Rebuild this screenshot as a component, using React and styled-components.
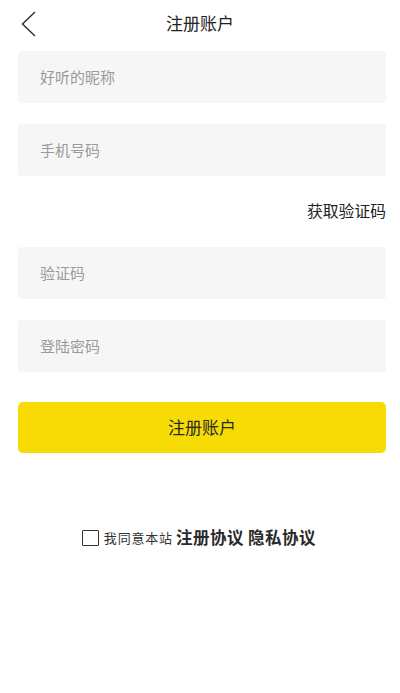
import React from "react";
import styled, { createGlobalStyle } from "styled-components";

const Global = createGlobalStyle`
  html, body { margin: 0; padding: 0; background: #ffffff; }
  body { font-family: "Noto Sans CJK SC", "Noto Sans", sans-serif; color: #222; }
  * { box-sizing: border-box; }
`;

const Page = styled.div`
  width: 400px;
  min-height: 693px;
  background: #fff;
  display: flex;
  flex-direction: column;
`;

const Header = styled.header`
  position: relative;
  height: 44px;
  display: flex;
  align-items: center;
  justify-content: center;
`;

const BackButton = styled.button`
  position: absolute;
  left: 16px;
  top: 8px;
  width: 26px;
  height: 32px;
  padding: 0;
  border: none;
  background: transparent;
  display: flex;
  align-items: center;
  justify-content: center;
`;

const Title = styled.h1`
  margin: 0;
  font-size: 17px;
  font-weight: 400;
  color: #222;
  line-height: 1;
`;

const Form = styled.div`
  display: flex;
  flex-direction: column;
  padding: 7px 14px 0 18px;
`;

const Field = styled.input`
  height: 52px;
  border: none;
  outline: none;
  border-radius: 4px;
  background: #f6f6f6;
  padding: 0 22px 2px;
  font-family: inherit;
  font-size: 15px;
  color: #333;
  margin-top: ${(p) => p.$gap || 0}px;
  &::placeholder { color: #9a9a9a; }
`;

const CodeRow = styled.div`
  height: 71px;
  display: flex;
  align-items: center;
  justify-content: flex-end;
`;

const CodeLink = styled.span`
  font-size: 15.8px;
  color: #222;
  line-height: 1;
  margin-top: -2px;
`;

const Submit = styled.button`
  margin-top: 30px;
  height: 51px;
  border: none;
  border-radius: 5px;
  background: #f6dc04;
  font-family: inherit;
  font-size: 17px;
  color: #2a2a2a;
  padding: 0 0 2px;
`;

const Agreement = styled.div`
  margin-top: 72px;
  height: 24px;
  display: flex;
  align-items: center;
  justify-content: center;
  padding-right: 2px;
`;

const Check = styled.span`
  width: 17px;
  height: 16px;
  border: 1.6px solid #333;
  border-radius: 1px;
  margin-right: 5px;
  margin-top: 1px;
`;

const Small = styled.span`
  font-size: 13px;
  letter-spacing: 0.8px;
  color: #333;
  margin-right: 3px;
`;

const Strong = styled.span`
  font-size: 16.5px;
  font-weight: 700;
  letter-spacing: 0.5px;
  color: #2a2a2a;
`;

export default function App() {
  return (
    <Page>
      <Global />
      <Header>
        <BackButton aria-label="返回">
          <svg width="16" height="26" viewBox="0 0 16 26">
            <polyline points="14,1 1.5,13 14,25" fill="none" stroke="#333" strokeWidth="1.5" strokeLinejoin="miter" />
          </svg>
        </BackButton>
        <Title>注册账户</Title>
      </Header>
      <Form>
        <Field placeholder="好听的昵称" />
        <Field placeholder="手机号码" $gap={21} />
        <CodeRow>
          <CodeLink>获取验证码</CodeLink>
        </CodeRow>
        <Field placeholder="验证码" />
        <Field placeholder="登陆密码" type="password" $gap={21} />
        <Submit>注册账户</Submit>
      </Form>
      <Agreement>
        <Check />
        <Small>我同意本站</Small>
        <Strong>注册协议 隐私协议</Strong>
      </Agreement>
    </Page>
  );
}
